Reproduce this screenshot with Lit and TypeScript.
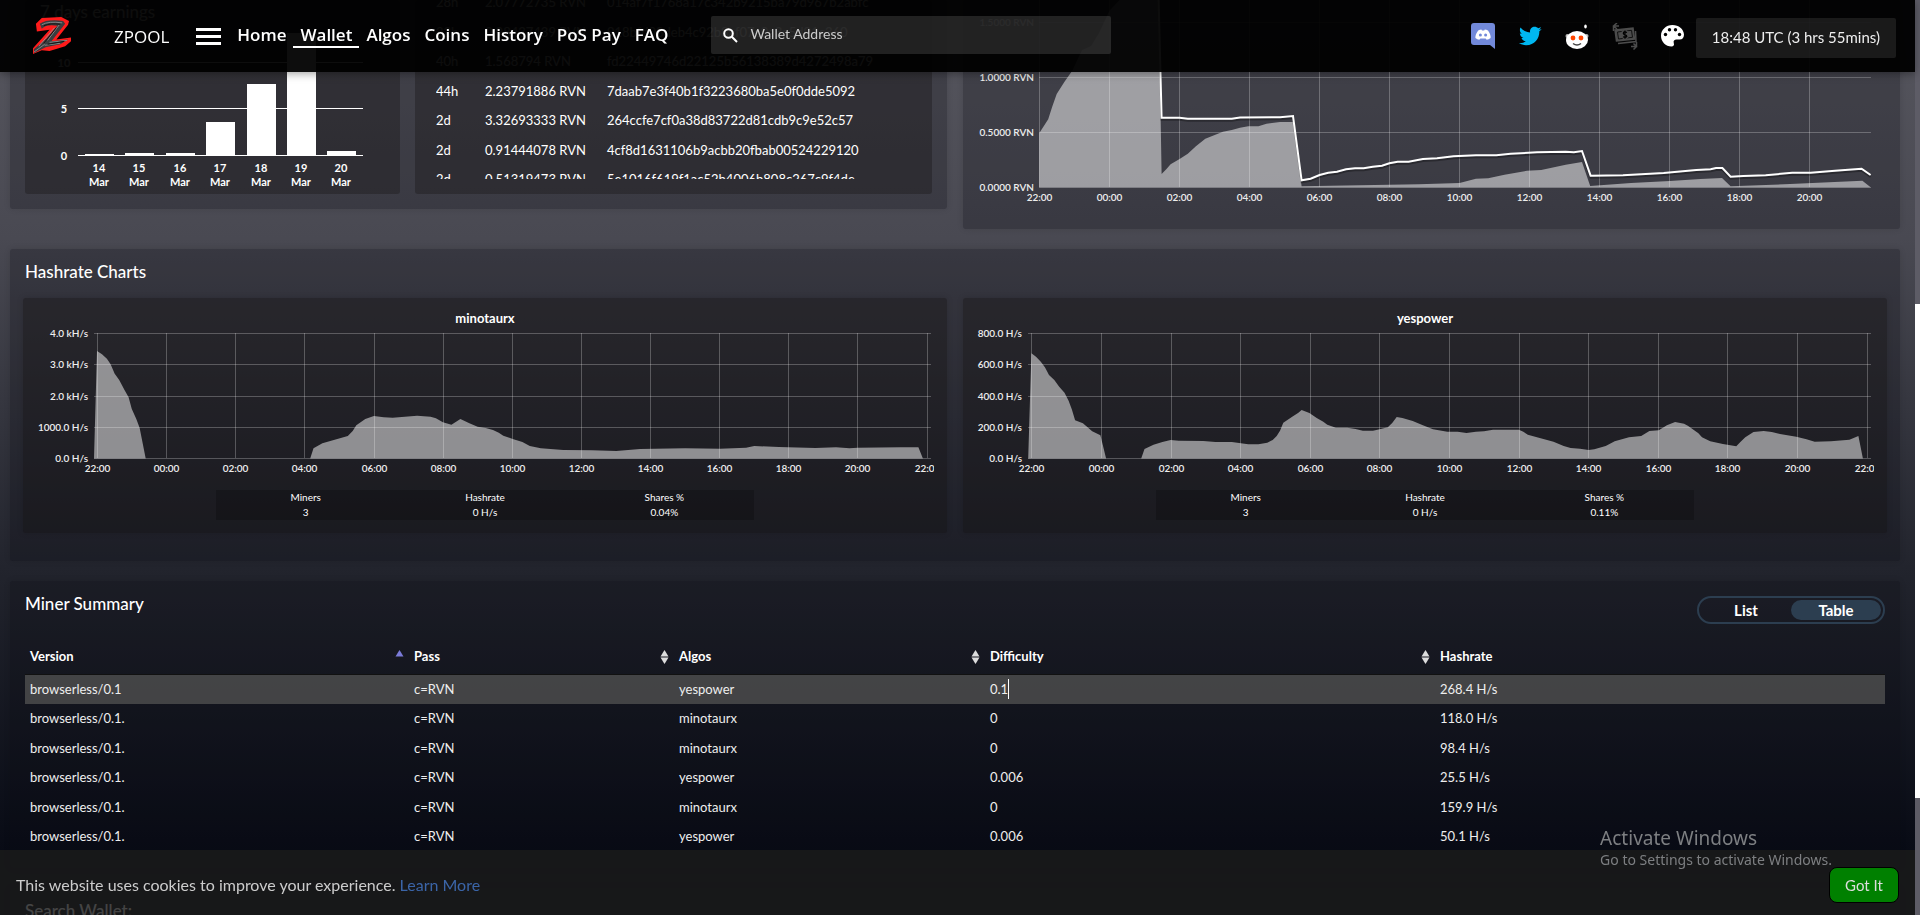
import { LitElement, html, svg, css } from "lit";
import { customElement, property, state } from "lit/decorators.js";
import { classMap } from "lit/directives/class-map.js";

const shared = css`
  *, *::before, *::after { box-sizing: border-box; }
  svg { display: block; }
  a { color: inherit; text-decoration: none; }
  button { font: inherit; color: inherit; border: 0; background: none; padding: 0; cursor: pointer; }
`;

type Point = [number, number];
const toPath = (points: Point[]) => points.map((p) => p.join(" ")).join(" L ");

/* Area shapes in the coordinates of each chart's view box. */
const MINOTAURX: Point[] = [
  [71, 133.5], [74, 26], [79, 29.3], [83.9, 33.7], [87.6, 39.3], [91.7, 48.7], [96.2, 55], [101.5, 65],
  [105.6, 72.3], [108.8, 84], [113.3, 94], [116.6, 102.7], [122.7, 133.5], [287.2, 133.5], [290.5, 123.3],
  [299.4, 118.3], [324.8, 111], [329.7, 106], [333.3, 100.3], [342.3, 94], [350.9, 91], [360.7, 92.3],
  [369.7, 92.7], [394.1, 90.7], [407.6, 91.7], [412.9, 93.3], [419.9, 97.3], [428.4, 99.7], [437.4, 94],
  [446.4, 98.3], [454.6, 101.7], [462.7, 103], [470, 105], [475.8, 107.7], [480.3, 110.7], [489.7, 114],
  [499.4, 117], [506.8, 121], [517.8, 123.3], [540.3, 125], [568.8, 125.3], [593.3, 126], [617, 124],
  [662, 123.3], [697, 123.7], [723, 122.7], [731.3, 121], [755.8, 122], [792.5, 123], [813, 122.3],
  [826.4, 123.3], [834.6, 122.7], [878, 122.3], [895.4, 122.3], [899.9, 133.5],
];
const YESPOWER: Point[] = [
  [65.2, 133.5], [68.4, 28.3], [73, 31.7], [77.8, 36.7], [81.9, 42.3], [86, 50], [91.3, 55], [96.2, 61.7],
  [101.5, 67.7], [105.6, 75.7], [108.8, 84.3], [112.1, 95.3], [119.9, 98.3], [129.2, 106.3], [137.4, 110.3],
  [143.1, 133.5], [178.2, 133.5], [181.5, 124], [190.5, 119.7], [199.4, 117], [207.6, 115], [215.8, 115.7],
  [240.3, 116], [252.5, 117], [268.8, 117], [285.2, 119.3], [295.4, 119.3], [304.3, 117.7], [309.7, 115],
  [313.7, 111], [317, 105.7], [320.3, 97.7], [329.2, 91.7], [335.4, 87.7], [338.6, 85], [346.4, 88],
  [353.7, 93], [360.3, 96.7], [364.3, 99.7], [372.9, 102.7], [384.3, 102.7], [392.5, 104], [399.9, 105.7],
  [410, 105.7], [416.6, 104.3], [424.8, 102.3], [429.2, 98], [433.7, 92], [439.4, 93], [449.7, 96],
  [459.9, 100.3], [470, 104.3], [484.3, 106.7], [494.6, 106.7], [503.5, 108], [512.9, 106.7], [521, 106.3],
  [530, 104.7], [555.8, 104.7], [560.3, 106.7], [564.8, 109.7], [590.5, 116.7], [600.7, 121], [607.6, 123],
  [617, 123.7], [625.6, 125], [631.3, 124.3], [642.7, 121], [651.7, 116.3], [666, 112.3], [678.2, 111],
  [686.4, 106], [695.8, 105.3], [703.9, 100.3], [712.1, 97], [721.1, 98.7], [725.2, 101], [735.4, 108.3],
  [739, 112.3], [747.2, 116.3], [759.9, 119], [773.3, 121.3], [777.4, 117], [782.3, 112.3], [790.5, 107],
  [800.7, 106], [808.8, 107], [817, 109], [833.3, 111.7], [843.5, 114.3], [851.7, 116.7], [868, 116.3],
  [886.4, 114.7], [895.4, 111], [899.9, 133.5],
];
const UNPAID_AREA: Point[] = [
  [76.2, 187.3], [76.2, 133.3], [85.2, 119.3], [89.2, 106.7], [93.7, 94], [101.5, 81.7], [109.7, 70],
  [119, 50], [128, 46], [136, 33], [146.4, 10.7], [156.6, 0], [195.6, 0], [198.6, 174], [203.5, 169],
  [207.6, 164.3], [216.6, 159], [224.8, 153.7], [232.9, 146.3], [242.3, 138.7], [259.9, 131.7],
  [268.8, 130], [277, 127.7], [285.2, 126.3], [295.4, 126.3], [303.5, 123.7], [317, 122], [330.9, 122],
  [338.6, 186.3], [455.8, 184.3], [496.6, 183], [512.9, 178.7], [525.2, 178.3], [541.5, 174.7],
  [564, 170.7], [578.2, 170], [602.7, 164.7], [619, 162], [627.2, 186], [668, 183], [706.8, 181],
  [737.4, 179], [759, 178], [767.6, 186.3], [827.2, 184], [899.4, 180.7], [907.6, 187.3],
];
const BALANCE_LINE: Point[] = [
  [195.6, 0], [198.6, 117.7], [216.6, 117.7], [224.8, 118.7], [268.8, 118.7], [277, 117.5], [317, 117.2],
  [330, 116], [338.6, 180.3], [347.6, 178.7], [356.6, 175], [365.2, 172.7], [374, 171.7], [383, 169.3],
  [392, 168.3], [400.7, 168.3], [409.7, 166.7], [419, 165.7], [426.4, 163.3], [434.6, 161.7],
  [445.6, 161.7], [459.9, 159], [474, 158.3], [490.5, 156.3], [513, 155.3], [533.3, 155.3], [547.6, 153.7],
  [574, 152.3], [602.7, 151.7], [610.9, 152.3], [619, 151], [627.6, 175.7], [660, 175.3], [700.7, 173],
  [733.3, 170], [747.6, 169.3], [753, 168], [759.4, 168], [767.6, 176.7], [780.3, 176], [802.7, 175.3],
  [829.2, 172.7], [847.6, 172.7], [872, 170.7], [898.6, 168.7], [907.6, 175],
];

const hours = (count: number) =>
  Array.from({ length: count }, (_, i) => `${String((22 + i * 2) % 24).padStart(2, "0")}:00`);

interface Algo {
  name: string;
  miners: string;
  hashrate: string;
  share: string;
  left: number;
  firstTick: number;
  tickStep: number;
  scale: string[];
  area: Point[];
}

const ALGOS: Algo[] = [
  { name: "minotaurx", miners: "3", hashrate: "0 H/s", share: "0.04%", left: 71, firstTick: 74, tickStep: 69.13,
    scale: ["4.0 kH/s", "3.0 kH/s", "2.0 kH/s", "1000.0 H/s", "0.0 H/s"], area: MINOTAURX },
  { name: "yespower", miners: "3", hashrate: "0 H/s", share: "0.11%", left: 65, firstTick: 68.4, tickStep: 69.6,
    scale: ["800.0 H/s", "600.0 H/s", "400.0 H/s", "200.0 H/s", "0.0 H/s"], area: YESPOWER },
];

@customElement("hashrate-card")
class HashrateCard extends LitElement {
  @property({ attribute: false }) algo!: Algo;

  static styles = [shared, css`
    :host { display: block; padding: 13px 0; background: rgba(19, 17, 17, .36); border-radius: 3px; box-shadow: 0 0 6px rgba(0, 0, 0, .15); }
    .name { margin: 0; font-size: 13px; font-weight: 700; line-height: 14px; text-align: center; }
    .plot { width: 100%; height: auto; }
    .grid { stroke: rgba(255, 255, 255, .25); }
    .area { fill: rgba(255, 255, 255, .5); }
    .tick { fill: #eee; font-size: 10px; font-weight: 600; }
    .end { text-anchor: end; }
    .mid { text-anchor: middle; }
    .stats { display: grid; grid-template-columns: repeat(3, 1fr); max-width: 538px; margin: 15px auto 0; background: rgba(0, 0, 0, .2); font-size: 10px; line-height: 15px; text-align: center; }
  `];

  render() {
    const a = this.algo;
    return html`
      <h3 class="name">${a.name}</h3>
      <svg class="plot" viewBox="0 0 924 150" role="img" aria-label="${a.name} hashrate">
        <svg width="911" height="150">
          <path class="area" d="M ${toPath(a.area)} Z" />
          ${a.scale.map((label, i) => {
            const y = Math.round(8 + i * 31.25) + 0.5;
            return svg`
              <line class="grid" x1=${a.left} x2="908" y1=${y} y2=${y} />
              <text class="tick end" x=${a.left - 6} y=${y + 3}>${label}</text>`;
          })}
          ${hours(13).map((label, i) => {
            const x = Math.round(a.firstTick + i * a.tickStep) + 0.5;
            return svg`
              <line class="grid" x1=${x} x2=${x} y1="8" y2="133" />
              <text class="tick mid" x=${x} y="147">${label}</text>`;
          })}
        </svg>
      </svg>
      <div class="stats">
        <div>Miners<br />${a.miners}</div>
        <div>Hashrate<br />${a.hashrate}</div>
        <div>Shares %<br />${a.share}</div>
      </div>`;
  }
}

const EARNINGS = [
  { day: 14, top: 154 }, { day: 15, top: 153 }, { day: 16, top: 153 }, { day: 17, top: 122 },
  { day: 18, top: 84 }, { day: 19, top: 33 }, { day: 20, top: 151 },
];

@customElement("earnings-chart")
class EarningsChart extends LitElement {
  static styles = [shared, css`
    :host { display: block; background: rgba(19, 17, 17, .32); border-radius: 3px; }
    .plot { width: 100%; height: auto; }
    .title { fill: #fff; font-size: 17px; }
    .axis { stroke: #fff; }
    .bar { fill: #fff; }
    .tick { fill: #fff; font-size: 11px; font-weight: 700; text-anchor: middle; }
  `];

  render() {
    return html`
      <svg class="plot" viewBox="0 0 375 194" role="img" aria-label="7 days earnings">
        <text class="title" x="15" y="18">7 days earnings</text>
        ${[[10, 62], [5, 108], [0, 155]].map(([value, y]) => svg`
          <line class="axis" x1="53" x2="338" y1=${y + 0.5} y2=${y + 0.5} />
          <text class="tick" x="39" y=${y + 5}>${value}</text>`)}
        ${EARNINGS.map(({ day, top }, i) => {
          const x = Math.round(60 + i * 40.4);
          return svg`
            <rect class="bar" x=${x} y=${top} width="29" height=${155 - top} />
            <text class="tick" x=${x + 14} y="172">${day}</text>
            <text class="tick" x=${x + 14} y="186">Mar</text>`;
        })}
      </svg>`;
  }
}

@customElement("unpaid-chart")
class UnpaidChart extends LitElement {
  static styles = [shared, css`
    :host { display: block; background: rgba(10, 12, 18, .26); border-radius: 3px; box-shadow: 0 0 6px rgba(0, 0, 0, .12); }
    .plot { width: 100%; height: auto; }
    .grid { stroke: rgba(255, 255, 255, .25); }
    .area { fill: rgba(255, 255, 255, .5); }
    .line { fill: none; stroke: #fff; stroke-width: 2; }
    .shade { fill: none; stroke: rgba(0, 0, 0, .3); stroke-width: 2; }
    .tick { fill: #eee; font-size: 10px; font-weight: 600; }
    .end { text-anchor: end; }
    .mid { text-anchor: middle; }
  `];

  render() {
    return html`
      <svg class="plot" viewBox="0 0 937 229" role="img" aria-label="Unpaid balance">
        <path class="area" d="M ${toPath(UNPAID_AREA)} Z" />
        ${["1.5000 RVN", "1.0000 RVN", "0.5000 RVN", "0.0000 RVN"].map((label, i) => {
          const y = 22.5 + i * 55;
          return svg`
            <line class="grid" x1="76" x2="908" y1=${y} y2=${y} />
            <text class="tick end" x="71" y=${y + 3}>${label}</text>`;
        })}
        ${hours(12).map((label, i) => {
          const x = Math.round(76 + i * 70.03) + 0.5;
          return svg`
            <line class="grid" x1=${x} x2=${x} y1="0" y2="187" />
            <text class="tick mid" x=${x} y="201">${label}</text>`;
        })}
        <path class="shade" d="M ${toPath(BALANCE_LINE.map(([x, y]): Point => [x, y + 2]))}" />
        <path class="line" d="M ${toPath(BALANCE_LINE)}" />
      </svg>`;
  }
}

const ICONS = {
  logo: svg`
    <path fill="#ff1b1b" d="M5 7 L11 1 L31 0 L39 4 L38 8 L26 23 L41 21 L41 25 L35 30 L19 35 L11 34 L2 38 L2 32 L19 13 L6 15 Z" />
    <path fill="#3b3d3f" d="M9 7 Q16 2 33 4 L35 7 L21 25 L38 23 L30 28 L15 31 L3 37 L3 33 L16 22 L27 9 Q16 7 11 12 Z" />
    <path fill="none" stroke="#98999b" stroke-width=".8" d="M11 8 Q18 4 32 6 M29 8 L17 24 M24 11 L8 30 M19 26 L37 24 M14 29 L30 27 M3 36 L14 28" />
    <path fill="none" stroke="#141414" stroke-width="1" d="M13 9 Q20 6 30 7.5 M26 11 L13 27 M17 28 L34 25" />`,
  discord: svg`
    <path fill="#7289da" d="M3 0 H21 Q24 0 24 3 V26 L19 22 H3 Q0 22 0 19 V3 Q0 0 3 0 Z" />
    <path fill="#fff" d="M7.2 7.6 Q9 6.6 10.4 6.6 L11 7.6 H13.2 L13.8 6.6 Q15.4 6.6 17 7.6 Q20 12 19.6 15 Q17.6 16.8 15.7 16.8 L14.6 15.4 H9.4 L8.3 16.8 Q6.3 16.8 4.4 15 Q4.1 12 7.2 7.6 Z" />
    <circle cx="9.4" cy="12" r="1.5" fill="#7289da" /><circle cx="14.6" cy="12" r="1.5" fill="#7289da" />`,
  twitter: svg`<path fill="#00b7f1" d="M23.643 4.937c-.835.37-1.732.62-2.675.733.962-.576 1.7-1.49 2.048-2.578-.9.534-1.897.922-2.958 1.13-.85-.904-2.06-1.47-3.4-1.47-2.572 0-4.658 2.086-4.658 4.66 0 .364.042.718.12 1.06-3.873-.195-7.304-2.05-9.602-4.868-.4.69-.63 1.49-.63 2.342 0 1.616.823 3.043 2.072 3.878-.764-.025-1.482-.234-2.11-.583v.06c0 2.257 1.605 4.14 3.737 4.568-.392.106-.803.162-1.227.162-.3 0-.593-.028-.877-.082.593 1.85 2.313 3.198 4.352 3.234-1.595 1.25-3.604 1.995-5.786 1.995-.376 0-.747-.022-1.112-.065 2.062 1.323 4.51 2.093 7.14 2.093 8.57 0 13.255-7.098 13.255-13.254 0-.2-.005-.402-.014-.602.91-.658 1.7-1.477 2.323-2.41z" />`,
  reddit: svg`
    <ellipse cx="20.5" cy="2.5" rx="1.3" ry="2" fill="#fff" /><circle cx="2.5" cy="12" r="2" fill="#bbb" /><circle cx="21.5" cy="12" r="2" fill="#bbb" />
    <ellipse cx="12" cy="16" rx="11" ry="9" fill="#fff" />
    <circle cx="8" cy="14" r="2.4" fill="#ff4500" /><circle cx="16" cy="14" r="2.4" fill="#ff4500" />
    <path fill="none" stroke="#444" stroke-width="1.5" d="M8 19.500 Q12 22.500 16 19.500" />`,
  money: svg`
    <g fill="none" stroke="#4c4c4c" stroke-width="1.5">
      <path d="M1.500 3 H7 M5 0 L1.500 3 L5 6 M1.500 3 V8" /><path d="M24.500 19 V23.500 H19 M21.500 20.500 L24.500 23.500 L21.500 26.500" />
      <path fill="#4c4c4c" d="M3 7 L21 5 L22.500 16 L4.500 18 Z" /><path d="M6 20.500 L24 18.500 L23.500 8" />
      <path stroke="#111" stroke-width="1" d="M5.500 9 L19.500 7.300 L20.500 14.300 L6.500 16 Z" />
    </g>
    <ellipse cx="13" cy="11.700" rx="4.200" ry="4.800" fill="#4c4c4c" />
    <path fill="none" stroke="#000" stroke-width="1.200" d="M15 9.500 Q11.500 8 11.300 10.300 Q11.500 11.500 13 11.700 Q15 12.200 14.800 13.500 Q13.500 15 11 13.800 M13 7.500 V15.800" />`,
  palette: svg`
    <path fill="#fff" d="M11.5 0 C5 0 0 4.8 0 10.8 C0 17 4.8 21.5 10.5 21.5 C12.5 21.5 13.5 20 12.8 18.2 C12 16 13.4 14.6 15.5 14.6 H18.5 C21.5 14.6 23 12.5 23 9.5 C22.6 4 17.8 0 11.5 0 Z" />
    <g fill="#000"><circle cx="4.5" cy="9.5" r="1.7" /><circle cx="8.5" cy="4.7" r="1.7" /><circle cx="14.5" cy="4.7" r="1.7" /><circle cx="18.5" cy="9.5" r="1.7" /></g>`,
};

@customElement("site-nav")
class SiteNav extends LitElement {
  static styles = [shared, css`
    :host { display: flex; align-items: center; height: 72px; padding: 0 19px 0 31px; background: rgba(0, 0, 0, .95); box-shadow: 0 2px 8px rgba(0, 0, 0, .35); }
    .brand { display: flex; align-items: center; gap: 42px; font: 400 17px "Open Sans", sans-serif; }
    .menu { display: grid; gap: 4px; margin: 0 9px 0 27px; }
    .stripe { width: 25px; height: 3px; background: #fff; }
    .links { display: flex; }
    .link { padding: 0 7px; font: 600 17px/22px "Open Sans", sans-serif; border-bottom: 2px solid transparent; }
    .current { border-color: #fff; }
    .search { display: flex; align-items: center; gap: 12px; flex: 0 1 400px; height: 38px; margin: 0 auto 2px 36px; padding: 0 12px; background: rgba(255, 255, 255, .12); border-radius: 2px; }
    .field { flex: 1; min-width: 0; border: 0; outline: 0; padding: 0 0 4px; background: none; color: #fff; font: inherit; font-size: 14px; }
    .field::placeholder { color: #ccc; }
    .social { display: flex; align-items: center; gap: 23px; margin-right: 12px; }
    .clock { height: 40px; padding: 0 16px; background: rgba(255, 255, 255, .09); border-radius: 2px; color: #eee; font-size: 15px; line-height: 38px; margin-top: 4px; }
  `];

  render() {
    const links = ["Home", "Wallet", "Algos", "Coins", "History", "PoS Pay", "FAQ"];
    return html`
      <a class="brand" href="#">
        <svg width="41" height="38" viewBox="0 0 42 39" aria-hidden="true">${ICONS.logo}</svg>
        ZPOOL
      </a>
      <button class="menu" aria-label="Menu">
        <span class="stripe"></span><span class="stripe"></span><span class="stripe"></span>
      </button>
      <div class="links">
        ${links.map((l) => html`<a class=${classMap({ link: true, current: l === "Wallet" })} href="#">${l}</a>`)}
      </div>
      <label class="search">
        <svg width="15" height="15" viewBox="0 0 15 15" fill="none" stroke="#fff" stroke-width="2" aria-hidden="true">
          <circle cx="5.5" cy="5.5" r="4.3" /><path d="M8.800 8.800 L14 14" />
        </svg>
        <input class="field" type="text" placeholder="Wallet Address" aria-label="Wallet Address" />
      </label>
      <div class="social">
        <a href="#" aria-label="Discord"><svg width="24" height="26" viewBox="0 0 24 26">${ICONS.discord}</svg></a>
        <a href="#" aria-label="Twitter"><svg width="24" height="24" viewBox="0 0 24 24">${ICONS.twitter}</svg></a>
        <a href="#" aria-label="Reddit"><svg width="24" height="25" viewBox="0 0 24 25">${ICONS.reddit}</svg></a>
        <a href="#" aria-label="Exchange"><svg width="26" height="27" viewBox="0 0 26 27">${ICONS.money}</svg></a>
        <a href="#" aria-label="Theme"><svg width="23" height="22" viewBox="0 0 23 22">${ICONS.palette}</svg></a>
      </div>
      <time class="clock">18:48 UTC (3 hrs 55mins)</time>`;
  }
}

const PAYOUTS = [
  ["28h", "2.07772735 RVN", "014af7f1768a17c342b9215ba79d967b2abfc"],
  ["32h", "0.98437439 RVN", "918bfd08deb4c92b8af07c0a3a5d91c360"],
  ["40h", "1.568794 RVN", "fd22449746d22125b56138389d4272498a79"],
  ["44h", "2.23791886 RVN", "7daab7e3f40b1f3223680ba5e0f0dde5092"],
  ["2d", "3.32693333 RVN", "264ccfe7cf0a38d83722d81cdb9c9e52c57"],
  ["2d", "0.91444078 RVN", "4cf8d1631106b9acbb20fbab00524229120"],
  ["2d", "0.51319473 RVN", "5e1016f619f1ac52b4006b808c267c9f4de"],
];

const MINERS = [
  ["browserless/0.1", "c=RVN", "yespower", "0.1", "268.4 H/s"],
  ["browserless/0.1.", "c=RVN", "minotaurx", "0", "118.0 H/s"],
  ["browserless/0.1.", "c=RVN", "minotaurx", "0", "98.4 H/s"],
  ["browserless/0.1.", "c=RVN", "yespower", "0.006", "25.5 H/s"],
  ["browserless/0.1.", "c=RVN", "minotaurx", "0", "159.9 H/s"],
  ["browserless/0.1.", "c=RVN", "yespower", "0.006", "50.1 H/s"],
];

@customElement("app-root")
class AppRoot extends LitElement {
  @state() private view = "Table";

  static styles = [shared, css`
    :host { display: block; position: relative; height: 100vh; overflow: hidden; color: #fff; font: 16px Lato, sans-serif; background: linear-gradient(#57575f 0%, #494952 26%, #22242d 62%, #080b15 93%); }
    .bar { position: fixed; inset: 0 5px auto 0; z-index: 2; }
    .track { position: fixed; inset: 0 0 0 auto; width: 5px; background: #5d5c66; }
    .thumb { height: 54%; margin-top: 304px; background: #fff; }
    .page { display: grid; gap: 20px; padding: 0 20px 0 10px; }
    .pair { display: grid; grid-template-columns: 1fr 1fr; gap: 16px; align-items: start; }
    .panel { background: rgba(10, 12, 18, .26); border-radius: 3px; box-shadow: 0 0 6px rgba(0, 0, 0, .12); }
    .wallet { display: grid; grid-template-columns: 375fr 517fr; gap: 15px; padding: 0 15px 15px; }
    .payouts { height: 194px; padding: 0 21px 15px; background: rgba(19, 17, 17, .32); border-radius: 3px; }
    .clip { height: 179px; overflow: hidden; }
    .list { width: 100%; margin-top: -12px; border-collapse: collapse; font-size: 13px; line-height: 1.5; }
    .list td { padding: 5px 0; }
    .age { width: 49px; }
    .amount { width: 122px; }
    .rates { padding: 0 13px 28px; }
    .title { margin: 0; font-size: 17px; font-weight: 500; line-height: 15px; }
    .rates .title { padding: 15px 2px 19px; }
    .summary { padding: 15px 15px 16px; }
    .head { display: flex; justify-content: space-between; align-items: flex-start; }
    .toggle { display: grid; grid-template-columns: 1fr 1fr; width: 188px; height: 28px; padding: 2px; border: 2px solid #2c3e50; border-radius: 14px; font-size: 15px; font-weight: 700; line-height: 18px; }
    .choice { border-radius: 10px; }
    .on { background: #2c3e50; }
    .miners { width: 100%; margin-top: 16px; table-layout: fixed; border-collapse: collapse; font-size: 13px; line-height: 1.5; text-align: left; }
    .miners th { height: 34px; padding: 0 5px; border-bottom: 1px solid #111; font-weight: 700; }
    .miners td { padding: 5px; color: #eee; }
    .sortable { display: flex; justify-content: space-between; align-items: center; }
    .lit { background: rgba(90, 90, 88, .68); }
    .lit .caret { padding: 2px 0; border-right: 1px solid #fff; }
    .lookup { padding: 15px; }
    .cookies { position: fixed; inset: auto 5px 0 0; z-index: 2; display: flex; justify-content: space-between; align-items: center; height: 65px; padding: 4px 16px 0; background: rgba(27, 27, 27, .82); color: #ccc; }
    .more { color: #3b65a8; }
    .accept { width: 70px; height: 36px; background: #008000; border: 1px solid #000; border-radius: 8px; font-size: 15px; color: #ddd; }
    .notice { position: fixed; right: 88px; bottom: 44px; z-index: 3; color: #7d7f82; font: 14px/22px "Noto Sans", sans-serif; pointer-events: none; }
    .notice strong { display: block; font-size: 19px; font-weight: 400; }
  `];

  private arrows(active: boolean) {
    return html`<svg width="9" height="14" viewBox="0 0 9 14" aria-hidden="true">
      <path fill=${active ? "#7b7bd9" : "#ddd"} d="M4.500 0 L8.500 6.500 H.5 Z" />
      ${active ? null : svg`<path fill="#ddd" d="M.5 7.500 H8.500 L4.500 14 Z" />`}
    </svg>`;
  }

  render() {
    const columns: [string, number][] = [
      ["Version", 384], ["Pass", 265], ["Algos", 311], ["Difficulty", 450], ["Hashrate", 450],
    ];
    return html`
      <site-nav class="bar"></site-nav>
      <main class="page">
        <div class="pair">
          <section class="panel wallet">
            <earnings-chart></earnings-chart>
            <div class="payouts">
              <div class="clip">
                <table class="list">
                  ${PAYOUTS.map(([age, amount, tx]) => html`<tr><td class="age">${age}</td><td class="amount">${amount}</td><td>${tx}</td></tr>`)}
                </table>
              </div>
            </div>
          </section>
          <unpaid-chart></unpaid-chart>
        </div>
        <section class="panel rates">
          <h2 class="title">Hashrate Charts</h2>
          <div class="pair">${ALGOS.map((a) => html`<hashrate-card .algo=${a}></hashrate-card>`)}</div>
        </section>
        <section class="panel summary">
          <div class="head">
            <h2 class="title">Miner Summary</h2>
            <div class="toggle">
              ${["List", "Table"].map((v) => html`<button class=${classMap({ choice: true, on: this.view === v })} @click=${() => (this.view = v)}>${v}</button>`)}
            </div>
          </div>
          <table class="miners">
            <thead><tr>
              ${columns.map(([name, w], i) => html`<th style="width:${(w / 1860) * 100}%"><span class="sortable">${name}${i < 4 ? this.arrows(i === 0) : null}</span></th>`)}
            </tr></thead>
            <tbody>
              ${MINERS.map((row, r) => html`<tr class=${r === 0 ? "lit" : ""}>${row.map((cell, c) => html`<td><span class=${c === 3 ? "caret" : ""}>${cell}</span></td>`)}</tr>`)}
            </tbody>
          </table>
        </section>
        <section class="panel lookup">
          <h2 class="title">Search Wallet:</h2>
        </section>
      </main>
      <div class="track"><div class="thumb"></div></div>
      <footer class="cookies">
        <span>This website uses cookies to improve your experience. <a class="more" href="#">Learn More</a></span>
        <button class="accept">Got It</button>
      </footer>
      <div class="notice"><strong>Activate Windows</strong>Go to Settings to activate Windows.</div>`;
  }
}
